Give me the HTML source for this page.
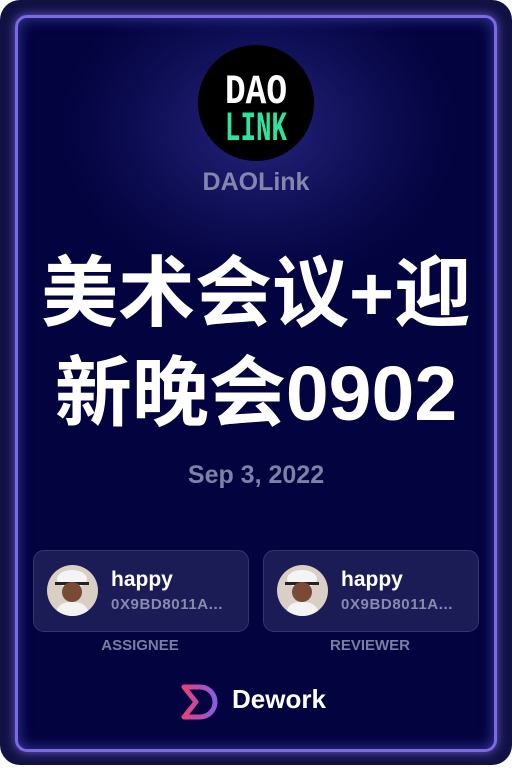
<!DOCTYPE html>
<html><head><meta charset="utf-8"><style>
html,body{margin:0;padding:0;background:#fff;width:512px;height:768px;overflow:hidden}
.card{position:absolute;left:0;top:0;width:512px;height:765px;border-radius:20px;background:#121144}
.inner{position:absolute;left:15px;top:15px;width:476px;height:731px;border:3px solid #7b6ae0;border-radius:12px;
background:radial-gradient(ellipse 200px 160px at 241px 110px,#24237a 0%,#0a0a4e 70%,#03033f 100%);box-shadow:0 0 10px #6a5bd0, inset 0 0 14px #3b3aa0}
.logo{position:absolute;left:198px;top:45px;width:116px;height:116px;border-radius:50%;background:#000}
.t{position:absolute;left:0;width:512px;text-align:center;font-family:"Liberation Sans","Noto Sans CJK SC",sans-serif;font-weight:bold}
.box{position:absolute;top:550px;width:214px;height:80px;border:1px solid #34346e;border-radius:11px;background:#1b1c56}
.av{position:absolute;left:13px;top:14px;width:51px;height:51px;border-radius:50%;background:#d9cfc4;overflow:hidden}
.nm{position:absolute;left:77px;top:17px;color:#fff;font:bold 21px "Liberation Sans",sans-serif}
.ad{position:absolute;left:77px;top:45px;color:#8a8aae;font:bold 15px "Liberation Sans",sans-serif;letter-spacing:.6px}
.lb{position:absolute;top:637px;width:214px;text-align:center;color:#7b7ca3;font:bold 15px "Liberation Sans",sans-serif}
</style></head><body>
<div class="card"><div class="inner"></div></div>
<div class="logo">
<svg width="116" height="116" viewBox="0 0 116 116">
<text x="58" y="58" text-anchor="middle" font-family="Liberation Mono,monospace" font-weight="bold" font-size="42" fill="#fff" textLength="62" lengthAdjust="spacingAndGlyphs">DAO</text>
<text x="58" y="95" text-anchor="middle" font-family="Liberation Mono,monospace" font-weight="bold" font-size="42" fill="#2ee3a0" textLength="62" lengthAdjust="spacingAndGlyphs">LINK</text>
</svg></div>
<div class="t" style="top:168px;font-size:25px;color:#8586ad">DAOLink</div>
<div class="t" style="top:244px;font-size:77px;line-height:100px;color:#fff">美术会议+迎<br>新晚会0902</div>
<div class="t" style="top:461px;font-size:25px;color:#7f80a8">Sep 3, 2022</div>
<div class="box" style="left:33px"><div class="av"><svg width="51" height="51"><ellipse cx="25" cy="14" rx="15" ry="9" fill="#f4f4f4"/><rect x="8" y="17" width="34" height="3" fill="#222"/><ellipse cx="25" cy="27" rx="10" ry="10" fill="#7a4a36"/><path d="M8 51 Q10 36 25 37 Q40 36 43 51Z" fill="#f3f3f3"/></svg></div><div class="nm">happy</div><div class="ad">0X9BD8011A...</div></div>
<div class="box" style="left:263px"><div class="av"><svg width="51" height="51"><ellipse cx="25" cy="14" rx="15" ry="9" fill="#f4f4f4"/><rect x="8" y="17" width="34" height="3" fill="#222"/><ellipse cx="25" cy="27" rx="10" ry="10" fill="#7a4a36"/><path d="M8 51 Q10 36 25 37 Q40 36 43 51Z" fill="#f3f3f3"/></svg></div><div class="nm">happy</div><div class="ad">0X9BD8011A...</div></div>
<div class="lb" style="left:33px">ASSIGNEE</div>
<div class="lb" style="left:263px">REVIEWER</div>
<svg style="position:absolute;left:180px;top:682px" width="40" height="40" viewBox="0 0 40 40">
<defs><linearGradient id="g" x1="0" x2="1"><stop offset="0" stop-color="#e8407a"/><stop offset="1" stop-color="#8b5ce0"/></linearGradient></defs>
<path d="M4 5 H20 A15 15 0 0 1 20 35 H4 L16 20 Z" fill="none" stroke="url(#g)" stroke-width="5" stroke-linejoin="round"/>
</svg>
<div style="position:absolute;left:232px;top:684px;color:#fff;font:bold 26px 'Liberation Sans',sans-serif">Dework</div>
</body></html>
